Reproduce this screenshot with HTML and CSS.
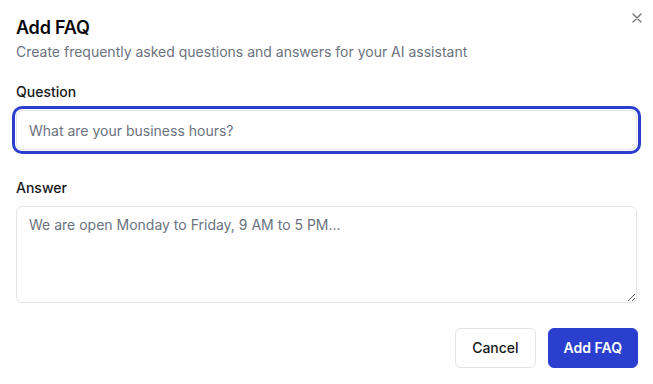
FILE: index.html
```html
<!DOCTYPE html>
<html lang="en">
<head>
<meta charset="utf-8">
<title>Add FAQ</title>
<link rel="stylesheet" href="styles.css">
</head>
<body>
<div class="dialog">
  <button class="close" type="button" aria-label="Close">
    <svg width="10" height="10" viewBox="0 0 10 10" fill="none" stroke="currentColor" stroke-width="1.3" stroke-linecap="round"><path d="M1 1 9 9M9 1 1 9"/></svg>
  </button>
  <header class="header">
    <h2 class="title">Add FAQ</h2>
    <p class="desc">Create frequently asked questions and answers for your AI assistant</p>
  </header>
  <form class="form">
    <div class="field">
      <label class="label" for="q">Question</label>
      <input id="q" class="input is-focused" type="text" placeholder="What are your business hours?" autofocus>
    </div>
    <div class="field field-answer">
      <label class="label" for="a">Answer</label>
      <textarea id="a" class="textarea" placeholder="We are open Monday to Friday, 9 AM to 5 PM..."></textarea>
    </div>
    <div class="actions">
      <button type="button" class="btn btn-outline">Cancel</button>
      <button type="button" class="btn btn-primary">Add FAQ</button>
    </div>
  </form>
</div>
</body>
</html>
```

FILE: styles.css
```css
* { box-sizing: border-box; }

html, body {
  margin: 0;
  background: #ffffff;
}

body {
  font-family: Inter, "Noto Sans", "Liberation Sans", sans-serif;
  color: #0a0a0a;
}

.dialog {
  position: relative;
  padding: 19px 16px 16px;
}

.close {
  position: absolute;
  top: 13px;
  right: 11px;
  width: 10px;
  height: 10px;
  padding: 0;
  border: 0;
  background: none;
  color: #6f7077;
  display: flex;
}

.header {
  display: flex;
  flex-direction: column;
  gap: 5px;
}

.title {
  margin: 0;
  font-size: 18px;
  line-height: 18px;
  font-weight: 600;
  letter-spacing: -0.2px;
  color: #0a0a0a;
}

.desc {
  margin: 0;
  font-size: 14px;
  line-height: 20px;
  color: #6b7280;
}

.form {
  display: flex;
  flex-direction: column;
  margin-top: 20px;
}

.field {
  display: flex;
  flex-direction: column;
  gap: 8px;
}

.field-answer {
  margin-top: 28px;
}

.label {
  font-size: 14px;
  line-height: 20px;
  font-weight: 500;
  color: #18181b;
}

.input,
.textarea {
  width: 100%;
  border: 1px solid #e4e4e7;
  border-radius: 6px;
  padding: 8px 12px;
  font-family: inherit;
  font-size: 14px;
  line-height: 20px;
  color: #18181b;
  background: #fff;
  outline: none;
}

.input {
  height: 40px;
}

.input.is-focused {
  box-shadow: 0 0 0 1px #ffffff, 0 0 0 4px #2b3fcf;
  border-radius: 6px;
}

.textarea {
  height: 97px;
  resize: vertical;
  display: block;
}

.input::placeholder,
.textarea::placeholder {
  color: #6b7280;
  opacity: 1;
}

.actions {
  display: flex;
  justify-content: flex-end;
  gap: 12px;
  margin-top: 25px;
  margin-right: -1px;
}

.btn {
  height: 40px;
  padding: 0 16px;
  border-radius: 6px;
  font-family: inherit;
  font-size: 14px;
  font-weight: 500;
  line-height: 20px;
  cursor: pointer;
}

.btn-outline {
  background: #ffffff;
  border: 1px solid #e4e4e7;
  color: #18181b;
}

.btn-primary {
  padding: 0 15px;
  background: #2b3fcf;
  border: 1px solid #2b3fcf;
  color: #ffffff;
  font-weight: 600;
}
```
